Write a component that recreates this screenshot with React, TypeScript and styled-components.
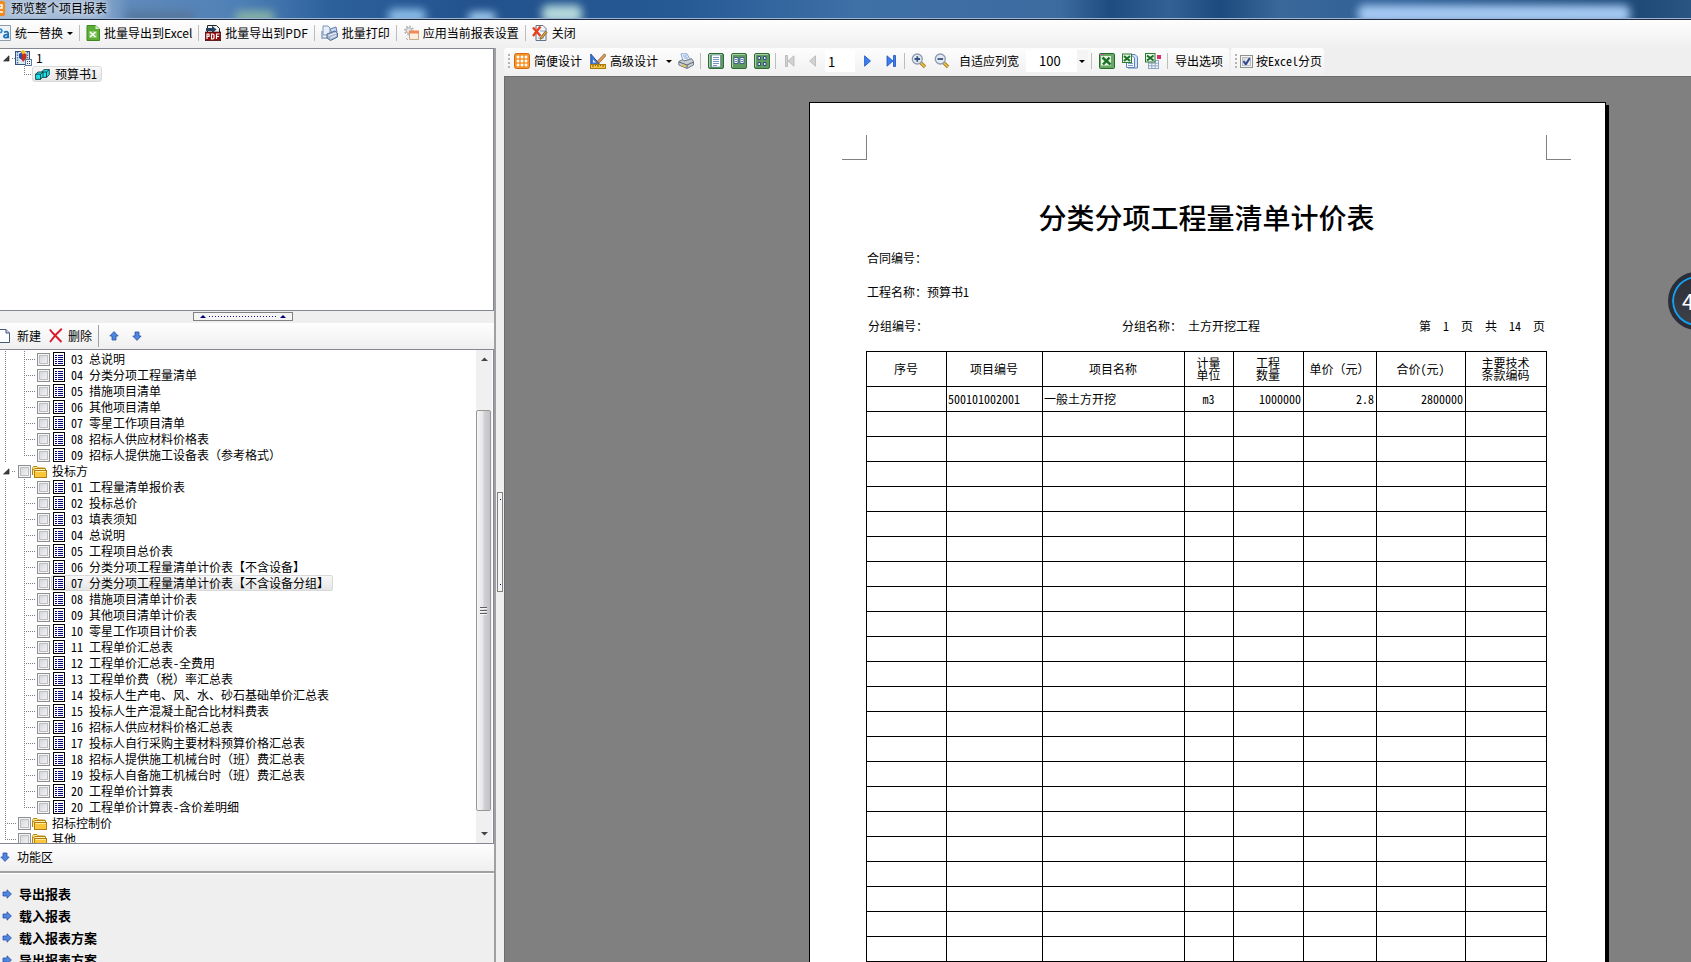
import React from "react";
import styled, { createGlobalStyle, css } from "styled-components";

const GlobalStyle = createGlobalStyle`
  *, *::before, *::after { box-sizing: border-box; }
  html, body { margin: 0; padding: 0; }
  body {
    font-family: "Noto Sans CJK SC", "Liberation Sans", sans-serif;
    font-size: 12px;
    line-height: 16px;
    color: #000;
  }
  button, input, select { font: inherit; color: inherit; margin: 0; }
  svg { display: block; flex: none; }
`;

/* ---------- window frame ---------- */

const Window = styled.div`
  display: flex;
  flex-direction: column;
  height: 100vh;
  overflow: hidden;
  position: relative;
  background: #efefef;
`;

const TitleBar = styled.header`
  flex: none;
  display: flex;
  align-items: center;
  gap: 6px;
  position: relative;
  height: 20px;
  padding-bottom: 3px;
  overflow: hidden;
  border-bottom: 1px solid #1d2b45;
  background: linear-gradient(90deg, #a9bdd6 0, #9fb6d3 90px, #5f8abb 130px, #4f80b6 240px, #2d619c 330px, #23528d 480px, #265a95 680px, #3f70a6 860px, #3c6ba0 1060px, #1f4c80 1110px, #346195 1170px, #1d4a7e 1220px, #3a689b 1280px, #2f5f96 1400px, #1f4a78 1640px, #2a5583 100%);
  &::after {
    content: "";
    position: absolute;
    inset: auto 0 0;
    height: 1px;
    background: #9fb6d3;
  }
`;

const Glow = styled.span<{ $x: number; $width: number; $height: number; $color: string }>`
  position: absolute;
  left: ${(p) => p.$x}px;
  bottom: -4px;
  width: ${(p) => p.$width}px;
  height: ${(p) => p.$height}px;
  border-radius: 6px;
  background: ${(p) => p.$color};
  filter: blur(4px);
`;

const TitleText = styled.h1`
  position: relative;
  margin: 0;
  font-size: 12px;
  font-weight: 400;
  text-shadow: 0 0 6px #dce7f3, 0 0 6px #dce7f3;
`;

const MainToolbar = styled.div`
  flex: none;
  display: flex;
  align-items: center;
  height: 28px;
  padding-bottom: 2px;
  overflow: hidden;
  background: linear-gradient(#fefefe, #efefef);
`;

const Body = styled.div`
  flex: 1;
  min-height: 0;
  display: flex;
`;

/* ---------- shared controls ---------- */

const HalfWidth = styled.span`
  font-feature-settings: "hwid" 1;
  white-space: pre;
`;

const ToolButton = styled.button<{ $left?: number; $right?: number; $gap?: number }>`
  display: flex;
  align-items: center;
  gap: ${(p) => p.$gap ?? 4}px;
  padding: 0 ${(p) => p.$right ?? 4}px 0 ${(p) => p.$left ?? 4}px;
  border: 0;
  background: none;
  white-space: nowrap;
`;

const IconButton = styled.button`
  flex: none;
  display: flex;
  justify-content: center;
  align-items: center;
  width: 23px;
  height: 22px;
  padding: 0;
  border: 0;
  background: none;
`;

const Separator = styled.span<{ $gap?: number }>`
  flex: none;
  width: 1px;
  height: 16px;
  margin: 0 ${(p) => p.$gap ?? 3}px;
  background: #bdbdbd;
`;

const DropArrow = styled.span<{ $before?: number }>`
  width: 0;
  height: 0;
  margin-left: ${(p) => p.$before ?? 0}px;
  border: 3px solid transparent;
  border-top-color: #000;
  border-bottom: 0;
`;

const CheckBox = styled.input`
  appearance: none;
  flex: none;
  width: 13px;
  height: 13px;
  border: 1px solid #8e8f8f;
  background: linear-gradient(135deg, #cdd0d5, #fafafa);
  box-shadow: inset 0 0 0 1px #f4f4f4, inset 0 0 0 2px #bcbec3;
  &:checked {
    background:
      url("data:image/svg+xml,%3Csvg xmlns='http://www.w3.org/2000/svg' viewBox='0 0 11 11'%3E%3Cpath d='M2.5 5l2.3 3.4L8.8 2' fill='none' stroke='%2331478f' stroke-width='2'/%3E%3C/svg%3E")
      center / 11px 11px no-repeat,
      linear-gradient(135deg, #cdd0d5, #fafafa);
  }
`;

/* ---------- left side ---------- */

const Sidebar = styled.aside`
  flex: 0 0 496px;
  display: flex;
  flex-direction: column;
  min-height: 0;
  border-right: 2px solid #a0a0a4;
`;

const ProjectTree = styled.div`
  flex: 0 0 263px;
  padding-top: 1px;
  background: #fff;
  border: solid #828790;
  border-width: 1px 1px 1px 0;
`;

const TreeRow = styled.div`
  display: flex;
  align-items: center;
  height: 16px;
  white-space: pre;
`;

const vDots = "repeating-linear-gradient(#808080 0 1px, transparent 1px 2px)";
const hDots = "repeating-linear-gradient(90deg, #808080 0 1px, transparent 1px 2px)";

const TrunkCell = styled.span<{ $line?: boolean }>`
  flex: 0 0 24px;
  height: 16px;
  background: ${(p) => (p.$line ? `${vDots} 5px 0 / 1px 16px no-repeat` : "none")};
`;

const BranchCell = styled.span<{ $last?: boolean; $width?: number; $x?: number }>`
  flex: 0 0 ${(p) => p.$width ?? 13}px;
  height: 16px;
  background:
    ${vDots} ${(p) => p.$x ?? 0}px 0 / 1px ${(p) => (p.$last ? 8 : 16)}px no-repeat,
    ${hDots} ${(p) => p.$x ?? 0}px 8px / 11px 1px no-repeat;
`;

const ExpanderCell = styled.button<{ $width: number }>`
  flex: 0 0 ${(p) => p.$width}px;
  display: flex;
  align-items: center;
  height: 16px;
  padding: 0 0 0 3px;
  border: 0;
  background: ${hDots} 12px 8px / 4px 1px no-repeat;
`;

const highlight = css`
  border-color: #d9d9d9;
  background: linear-gradient(#f8f8f8, #e6e6e6);
`;

const RowLabel = styled.label<{ $selected?: boolean; $folder?: boolean }>`
  display: flex;
  align-items: center;
  gap: ${(p) => (p.$folder ? 5 : 6)}px;
  height: 16px;
  margin-left: ${(p) => (p.$folder ? 0 : 1)}px;
  padding: 0 3px 0 ${(p) => (p.$folder ? 0 : 1)}px;
  border: 1px solid transparent;
  border-radius: 2px;
  ${(p) => p.$selected && highlight}
`;

const ProjectNode = styled.span`
  display: flex;
  align-items: center;
  gap: 5px;
  height: 16px;
  padding: 0 4px 0 2px;
  border: 1px solid transparent;
  border-radius: 3px;
  ${highlight}
`;

const RootNode = styled.span`
  display: flex;
  align-items: center;
  gap: 4px;
`;

const HorizontalSplitter = styled.div`
  flex: none;
  display: flex;
  justify-content: center;
  height: 12px;
  padding: 1px 8px 2px 0;
`;

const HorizontalHandle = styled.button`
  display: flex;
  align-items: center;
  justify-content: space-between;
  width: 100px;
  height: 9px;
  padding: 0 6px;
  border: 1px solid #808080;
  background: #f4f4f4;
`;

const HandleDots = styled.span`
  width: 68px;
  height: 1px;
  background: repeating-linear-gradient(90deg, #1a1a8c 0 1px, transparent 1px 3px);
`;

const HandleArrow = styled.span`
  border: 3px solid transparent;
  border-bottom-color: #00007a;
  border-top: 0;
`;

const ListToolbar = styled.div`
  flex: none;
  display: flex;
  align-items: center;
  height: 27px;
  padding-bottom: 1px;
  border-bottom: 1px solid #828790;
  background: linear-gradient(#fefefe, #efefef);
  overflow: hidden;
`;

const TallRule = styled.span`
  width: 1px;
  height: 22px;
  margin: 0 3px 0 2px;
  background: #a0a0a0;
`;

const ListBox = styled.div`
  flex: 1;
  min-height: 0;
  display: flex;
  padding-right: 1px;
  background: #fff;
  border: solid #828790;
  border-width: 0 1px 1px 0;
`;

const ListRows = styled.div`
  flex: 1;
  padding-top: 1px;
  overflow: hidden;
`;

const ScrollBar = styled.div`
  flex: 0 0 16px;
  display: flex;
  flex-direction: column;
  align-items: center;
  background: #f0f0f0;
`;

const ScrollButton = styled.button`
  flex: 0 0 18px;
  display: flex;
  align-items: center;
  justify-content: center;
  width: 16px;
  padding: 0;
  border: 0;
  background: none;
`;

const ScrollTrack = styled.div`
  flex: 1;
  display: flex;
  flex-direction: column;
  width: 100%;
  padding: 42px 1px 14px 0;
`;

const ScrollThumb = styled.div`
  flex: 1;
  display: flex;
  align-items: center;
  justify-content: center;
  border: 1px solid #979797;
  border-radius: 2px;
  background: linear-gradient(90deg, #f6f6f6, #e6e6e8 45%, #d0d0d5 55%, #c2c2c9);
`;

const FunctionPanel = styled.section`
  flex: 0 0 118px;
  overflow: hidden;
`;

const FunctionHead = styled.h2`
  display: flex;
  align-items: center;
  gap: 7px;
  height: 29px;
  margin: 0;
  padding-bottom: 1px;
  font-size: 12px;
  font-weight: 400;
  border-bottom: 2px solid #a0a0a0;
  background: linear-gradient(#fefefe, #efefef);
`;

const FunctionList = styled.div`
  display: flex;
  flex-direction: column;
  padding-top: 9px;
  border-top: 1px solid #fff;
`;

const FunctionButton = styled.button`
  display: flex;
  align-items: center;
  gap: 7px;
  height: 22px;
  padding: 0 2px;
  border: 0;
  background: none;
  font-size: 13px;
  font-weight: 700;
  white-space: nowrap;
`;

const VerticalSplitter = styled.div`
  flex: 0 0 8px;
  display: flex;
  flex-direction: column;
  align-items: center;
  justify-content: center;
  padding-top: 74px;
`;

const VerticalHandle = styled.button`
  width: 6px;
  height: 100px;
  padding: 0;
  border: 1px solid #808080;
  background:
    linear-gradient(#00007a, #00007a) 2px 6px / 1px 1px no-repeat,
    linear-gradient(#00007a, #00007a) 2px 91px / 1px 1px no-repeat,
    #f4f4f4;
`;

/* ---------- preview ---------- */

const Preview = styled.main`
  flex: 1;
  min-width: 0;
  display: flex;
  flex-direction: column;
`;

const PreviewBars = styled.div`
  flex: none;
  display: flex;
  gap: 2px;
  height: 28px;
`;

const Bar = styled.div`
  flex: none;
  display: flex;
  align-items: center;
  padding: 0 2px 2px 4px;
  border-radius: 3px 3px 0 0;
  background: linear-gradient(#fdfdfd, #f0f0f0);
  white-space: nowrap;
`;

const Grip = styled.span`
  flex: none;
  width: 2px;
  height: 15px;
  background: repeating-linear-gradient(#b4b4b4 0 2px, transparent 2px 4px);
`;

const PageInput = styled.input`
  flex: none;
  width: 30px;
  height: 22px;
  margin: 0 1px;
  padding: 0 3px;
  border: 0;
  background: #fff;
  font-size: 13px;
`;

const ZoomBox = styled.span`
  flex: none;
  display: grid;
  align-items: center;
  width: 62px;
  margin-left: 3px;
  background: linear-gradient(#f4f4f4, #f4f4f4) right / 11px 22px no-repeat #fff;
  > * { grid-area: 1 / 1; }
  > span { justify-self: end; margin-right: 3px; pointer-events: none; }
`;

const ZoomSelect = styled.select`
  appearance: none;
  width: 100%;
  height: 22px;
  padding: 0 0 0 13px;
  border: 0;
  background: none;
  font-size: 13px;
`;

const PagingLabel = styled.label`
  display: flex;
  align-items: center;
  gap: 3px;
`;

const Canvas = styled.div`
  flex: 1;
  min-height: 0;
  overflow: hidden;
  padding: 25px 82px 0 304px;
  border-top: 1px solid #6d6d6d;
  border-left: 1px solid #6d6d6d;
  background: #808080;
`;

const Paper = styled.article`
  width: 797px;
  min-height: 1124px;
  padding: 32px 58px 0 56px;
  border: 1px solid #000;
  background: #fff;
  box-shadow: 3px 3px 0 #000;
`;

const Corners = styled.div`
  display: flex;
  justify-content: space-between;
  margin: 0 -24px;
`;

const Corner = styled.span<{ $right?: boolean }>`
  width: 25px;
  height: 25px;
  border-bottom: 1px solid #808080;
  ${(p) => (p.$right ? "border-left" : "border-right")}: 1px solid #808080;
`;

const ReportTitle = styled.h2`
  margin: 37px 0 0;
  font-size: 28px;
  font-weight: 500;
  line-height: 40px;
  text-align: center;
`;

const MetaBlock = styled.div`
  display: flex;
  flex-direction: column;
  gap: 18px;
  padding: 13px 1px 17px;
`;

const MetaLine = styled.p`
  margin: 0;
`;

const MetaSplit = styled.div`
  display: grid;
  grid-template-columns: 254px 1fr auto;
  padding: 0 1px;
`;

const ReportTable = styled.table`
  width: 100%;
  table-layout: fixed;
  border-collapse: collapse;
`;

const HeadCell = styled.th`
  height: 35px;
  padding: 0 1px 0 0;
  border: 1px solid #000;
  font-weight: 400;
  line-height: 12px;
  text-align: center;
  white-space: pre;
`;

const Cell = styled.td<{ $align?: "left" | "center" | "right" }>`
  height: 25px;
  padding: 0 2px 0 1px;
  border: 1px solid #000;
  text-align: ${(p) => p.$align ?? "left"};
  white-space: nowrap;
`;

const SpeedBall = styled.div`
  position: absolute;
  top: 272px;
  right: -35px;
  width: 58px;
  height: 58px;
  padding-left: 10px;
  border: 4px solid #2b2d38;
  border-radius: 50%;
  background: linear-gradient(#2c2d36, #3f414b);
  box-shadow: inset 0 0 0 2px #14a0ee;
  color: #fff;
  font-size: 22px;
  line-height: 48px;
  white-space: nowrap;
`;

/* ---------- icons ---------- */

const AppIcon = () => (
  <svg width="5" height="15" viewBox="0 0 5 15">
    <rect x="-10" y="0" width="15" height="15" rx="2" fill="#f08a1d" />
    <path d="M0 4h2v3H0M0 11h3" stroke="#fff" strokeWidth="1.5" fill="none" />
  </svg>
);
const ReplaceIcon = () => (
  <svg width="11" height="16" viewBox="0 0 11 16">
    <path d="M0 .5h10.500v15H0" fill="#eef4fa" stroke="#8f9caa" />
    <path d="M0 4c2.500 0 2.500 3.500 0 3.500" fill="none" stroke="#2f8acb" strokeWidth="1.600" />
    <path d="M4 7.200c3-1.400 4.200-.2 4.200 1.300v3.800h1M8 9.300c-5 0-5 3.400-2.500 3.400 1.500 0 2.500-1 2.500-2" fill="none" stroke="#1d73b8" strokeWidth="1.700" />
  </svg>
);
const BatchExcelIcon = () => (
  <svg width="14" height="16" viewBox="0 0 14 16">
    <path d="M1 .5h8.500L13.500 4v11.500H1z" fill="#5cad36" stroke="#3c8a20" />
    <path d="M9.500.5V4h4z" fill="#d5efc5" />
    <rect x="3" y="6" width="8" height="7" fill="#82c761" />
    <path d="M4 7l5.500 5M9.500 7L4 12" stroke="#fff" strokeWidth="1.500" />
  </svg>
);
const PdfIcon = () => (
  <svg width="16" height="16" viewBox="0 0 16 16">
    <path d="M2.500.5h9l3 3v5h-12z" fill="#eef1f5" stroke="#222" />
    <path d="M1 3h6V.8l4.500 3.700L7 8V6H1z" fill="#24415f" />
    <rect x=".3" y="7" width="15.400" height="8.700" fill="#8d0c0c" stroke="#300" strokeWidth=".6" />
    <path d="M2 14V9h2v2.500H2M6.500 9v5h1.500l1-1V10L8 9zM11.500 14V9H14.500M11.500 11.500h2.500" fill="none" stroke="#fff" strokeWidth="1.200" />
  </svg>
);
const BatchPrintIcon = () => (
  <svg width="17" height="16" viewBox="0 0 17 16">
    <path d="M2 1h5l2 2v7H2z" fill="#e7eefa" stroke="#7d93b6" />
    <path d="M1 6v7h5" fill="none" stroke="#8ba0bf" strokeWidth="1.500" />
    <path d="M9 4l6-2 1 5-5 2z" fill="#c3d6f3" stroke="#6680aa" />
    <path d="M6 9l8-3 2.500 2v4l-7 3.500L6 13z" fill="#a5b6d1" stroke="#546c92" />
    <path d="M7.500 10.500L15 8M9.500 13l5.500-2.500" stroke="#f5f8ff" />
  </svg>
);
const ApplyIcon = () => (
  <svg width="16" height="16" viewBox="0 0 16 16">
    <circle cx="6" cy="5.500" r="4" fill="none" stroke="#b5b5b5" strokeWidth="2" strokeDasharray="1.600 1.500" />
    <circle cx="6" cy="5.500" r="2.800" fill="#e4e4e4" stroke="#b0b0b0" />
    <path d="M6.500 6.500h9v8h-9z" fill="#fbeedf" stroke="#c9a78b" />
    <rect x="6" y="5.500" width="10" height="3" fill="#f08a55" />
    <path d="M3 13l2 2" stroke="#aaa" />
  </svg>
);
const CloseIcon = () => (
  <svg width="16" height="16" viewBox="0 0 16 16">
    <path d="M4 .5h7l3 3v12H4z" fill="#f2f5fa" stroke="#63738c" />
    <path d="M6 13h6M8 6h5" stroke="#93a3ba" />
    <path d="M1 2.500l7.500 8.500M8.500 1.500L1 11" stroke="#e8401c" strokeWidth="2.400" />
    <path d="M15 7.500l-5 6-2 .8.500-2L13.500 6z" fill="#d9a441" stroke="#7c5a1c" strokeWidth=".8" />
  </svg>
);
const ProjectIcon = () => (
  <svg width="17" height="16" viewBox="0 0 17 16">
    <rect x=".5" y="1.500" width="14" height="13" fill="#dce8f4" stroke="#33527a" />
    <path d="M2.500 2v12M12.500 2v8" stroke="#5476a0" strokeWidth="1.500" strokeDasharray="1.500 1" />
    <path d="M4 4l3-2v8L4 8z" fill="#2750b4" />
    <path d="M7 2.500L11.500 4v4L8 12 6.500 9z" fill="#c4311c" />
    <path d="M5.500 1.500L8 0l3 1.500-3 3z" fill="#f3c022" />
    <rect x="10.500" y="9.500" width="6" height="6" fill="#f2f6fb" stroke="#5a7ba3" />
    <path d="M12.500 11v1m2-1v1m-2 1v1m2-1v1" stroke="#345" />
  </svg>
);
const BookIcon = () => (
  <svg width="15" height="11" viewBox="0 0 15 11">
    <path d="M6.500 3L9 .6h5.300v5L11.500 8.400h-5z" fill="#1fe0e6" stroke="#062a2c" strokeWidth=".8" />
    <path d="M6.500 3h5v5.400M11.500 3l2.800-2.400" fill="none" stroke="#062a2c" strokeWidth=".8" />
    <path d="M.6 5.200L3 3h5v4.600L5.500 10.400H.6z" fill="#1fe0e6" stroke="#062a2c" strokeWidth=".8" />
    <path d="M.6 5.200h4.900v5.200M5.500 5.200L8 3" fill="none" stroke="#062a2c" strokeWidth=".8" />
  </svg>
);
const ExpandIcon = () => (
  <svg width="7" height="7" viewBox="0 0 7 7">
    <path d="M6 .8V6H.6z" fill="#404040" stroke="#222" strokeWidth=".7" />
  </svg>
);
const ReportIcon = () => (
  <svg width="12" height="14" viewBox="0 0 12 14" shapeRendering="crispEdges">
    <rect x=".5" y=".5" width="11" height="13" fill="#fff" stroke="#000" />
    <path d="M2 3.500h2m1 0h5M2 5.500h2m1 0h5M2 7.500h2m1 0h5M2 9.500h2m1 0h5M2 11.500h2m1 0h5" stroke="#000080" />
  </svg>
);
const FolderIcon = () => (
  <svg width="15" height="13" viewBox="0 0 15 13">
    <path d="M.5 10V3.500l1-2H5l1.500 1.500h6V5" fill="#fdf08c" stroke="#b98a14" />
    <path d="M.5 10V5.500L3 3.500h10.500V5" fill="#fff3b0" stroke="#b07f10" />
    <rect x="2.500" y="5.500" width="12" height="7" fill="#fcc63c" stroke="#b07f10" />
    <path d="M3.500 6.500h10" stroke="#ffe896" />
  </svg>
);
const NewIcon = () => (
  <svg width="10" height="14" viewBox="0 0 10 14">
    <path d="M0 .5h6L9.500 4v9.500H0" fill="#fbfdff" stroke="#46597a" />
    <path d="M6 .5V4h3.500" fill="#c7d5ea" stroke="#46597a" />
  </svg>
);
const DeleteIcon = () => (
  <svg width="14" height="15" viewBox="0 0 14 15">
    <path d="M.8 1.500l3 3.500L12.500 14M12.800.8L7 6.500 1 14" fill="none" stroke="#d71c2b" strokeWidth="1.900" />
  </svg>
);

const rotations = { right: 0, down: 90, up: 270 };
const BlueArrow = ({ dir }: { dir: keyof typeof rotations }) => (
  <svg width="10" height="10" viewBox="0 0 10 10">
    <path
      d="M1 3h4V.8L9.400 5 5 9.200V7H1z"
      transform={`rotate(${rotations[dir]} 5 5)`}
      fill="#4f86e0"
      stroke="#2a50a8"
      strokeWidth=".8"
    />
  </svg>
);

const ScrollArrow = ({ down }: { down?: boolean }) => (
  <svg width="7" height="4" viewBox="0 0 7 4">
    <path d={down ? "M0 0h7L3.500 3.500z" : "M0 4h7L3.500.5z"} fill="#444" />
  </svg>
);
const ThumbGrip = () => (
  <svg width="7" height="8" viewBox="0 0 7 8" shapeRendering="crispEdges">
    <path d="M0 .5h7M0 3.500h7M0 6.500h7" stroke="#606060" />
    <path d="M0 1.500h7M0 4.500h7M0 7.500h7" stroke="#f5f5f5" />
  </svg>
);
const SimpleDesignIcon = () => (
  <svg width="16" height="16" viewBox="0 0 16 16">
    <rect x=".5" y=".5" width="15" height="15" rx="2" fill="#f7942c" stroke="#d8690c" />
    <path d="M3 3h2v2H3zm4 0h2v2H7zm4 0h2v2h-2zM3 7h2v2H3zm4 0h2v2H7zm4 0h2v2h-2zM3 11h2v2H3zm4 0h2v2H7zm4 0h2v2h-2z" fill="#fff" stroke="#fff" strokeWidth=".6" />
  </svg>
);
const AdvancedDesignIcon = () => (
  <svg width="16" height="16" viewBox="0 0 16 16">
    <path d="M.8 1v10.500h9z" fill="#3f78d8" stroke="#224f9e" />
    <path d="M3 6.500v3h3z" fill="#e8f0fb" />
    <path d="M14.500.8L8 7.500l-1 2.800 2.800-1L16 2.500z" fill="#e0a063" stroke="#8a4f1d" strokeWidth=".8" />
    <rect x=".5" y="11.500" width="15" height="4" fill="#f5c644" stroke="#a97a0c" />
    <path d="M3 12v2m2.500-2v1M8 12v2m2.500-2v1m2.500-1v2" stroke="#7b580a" />
  </svg>
);
const PrinterIcon = () => (
  <svg width="16" height="16" viewBox="0 0 16 16">
    <path d="M3 .8h6l3 5.500-7 2z" fill="#f3f8ff" stroke="#86a5cf" />
    <path d="M5 3h4M6 5h4" stroke="#7ca1d8" />
    <path d="M.8 8.500L5 6.500l1 1.500 5.500-1.500 2-1 2 3v3.500L9 15.500.8 12z" fill="#c9cdd5" stroke="#757c88" />
    <path d="M1 9l8 3 6.500-3M9 12v3" fill="none" stroke="#5d6470" />
    <path d="M4 12l4 1.500" stroke="#e9c24a" strokeWidth="1.500" />
  </svg>
);
const GreenBase = ({ children }: { children: React.ReactNode }) => (
  <svg width="16" height="16" viewBox="0 0 16 16">
    <rect x=".5" y=".5" width="15" height="15" rx="1.500" fill="#5f9a60" stroke="#2f6b35" />
    <path d="M1.500 14V1.500H14" fill="none" stroke="#a8d0a4" />
    {children}
  </svg>
);
const OnePageIcon = () => (
  <GreenBase>
    <rect x="3.500" y="2" width="9" height="12" fill="#fff" stroke="#52709c" strokeWidth=".6" />
    <path d="M5 4.500h6M5 6.500h6M5 8.500h6M5 10.500h6M5 12.500h4" stroke="#7592c0" />
  </GreenBase>
);
const TwoPageIcon = () => (
  <GreenBase>
    <path d="M3 4.500h4v6H3zM9 4.500h4v6H9z" fill="#fff" stroke="#40618f" />
    <path d="M4 6.500h2M4 8.500h2m4-2h2m-2 2h2" stroke="#5a7dba" />
  </GreenBase>
);
const FourPageIcon = () => (
  <GreenBase>
    <path d="M4 3.500h2.500v3H4zM9.500 3.500H12v3H9.500zM4 9.500h2.500v3H4zM9.500 9.500H12v3H9.500z" fill="#e8effa" stroke="#2f4f80" />
  </GreenBase>
);
const FirstIcon = () => (
  <svg width="10" height="12" viewBox="0 0 10 12">
    <path d="M.5.5h2v11h-2zM9 .8v10.400L3 6z" fill="#d2d2d2" stroke="#b4b4b4" strokeWidth=".8" />
  </svg>
);
const PrevIcon = () => (
  <svg width="7" height="12" viewBox="0 0 7 12">
    <path d="M6.500.8v10.400L.6 6z" fill="#d2d2d2" stroke="#b4b4b4" strokeWidth=".8" />
  </svg>
);
const NextIcon = () => (
  <svg width="7" height="12" viewBox="0 0 7 12">
    <path d="M.6.8v10.400L6.500 6z" fill="#3c7ff0" stroke="#1c4fc0" strokeWidth=".8" />
  </svg>
);
const LastIcon = () => (
  <svg width="10" height="12" viewBox="0 0 10 12">
    <path d="M7.500.5h2v11h-2zM1 .8v10.400L7 6z" fill="#3c7ff0" stroke="#1c4fc0" strokeWidth=".8" />
  </svg>
);
const MagnifierIcon = ({ plus }: { plus?: boolean }) => (
  <svg width="16" height="16" viewBox="0 0 16 16">
    <path d="M9.500 9.500l4.500 4.500" stroke="#9a7414" strokeWidth="3.200" />
    <path d="M9.500 9.500l4.300 4.300" stroke="#efc24d" strokeWidth="1.700" />
    <circle cx="6.300" cy="6" r="5" fill="#e2eaf4" stroke="#8f9cb0" strokeWidth="1.300" />
    <path d={plus ? "M3.500 6h5.600M6.300 3.200v5.600" : "M3.500 6h5.600"} stroke="#38527c" strokeWidth="1.800" />
  </svg>
);
const ExcelIcon = () => (
  <svg width="16" height="16" viewBox="0 0 16 16">
    <rect x=".5" y=".5" width="15" height="15" rx="1" fill="#6aa866" stroke="#236b26" />
    <rect x="2" y="3" width="10" height="9.500" fill="#e4f3e1" />
    <path d="M3.500 4.500l8 7M10.500 4.500L4 11.500" stroke="#1d6e28" strokeWidth="2.400" />
    <path d="M2 1.500h3" stroke="#d544c8" />
  </svg>
);
const ExcelPagesIcon = () => (
  <svg width="16" height="16" viewBox="0 0 16 16">
    <path d="M7 1.500h6l2.500 2.500v11H6z" fill="#d3e3f8" stroke="#5f83b8" />
    <path d="M4.500 3h6l2 2v9.500h-8z" fill="#f3f8ff" stroke="#5f83b8" />
    <path d="M6 10.500h5M6 12.500h5" stroke="#7d9fd0" />
    <rect x=".5" y="1" width="9" height="8.500" fill="#eaf6e8" stroke="#2c7c33" />
    <path d="M2 3l6 5M8 3L2 8" stroke="#1d6e28" strokeWidth="2" />
  </svg>
);
const ExcelGridIcon = () => (
  <svg width="16" height="16" viewBox="0 0 16 16">
    <rect x="3.500" y="7.500" width="10" height="8" fill="#f7faff" stroke="#8ea4c4" />
    <path d="M3.500 10.200h10M3.500 12.800h10M6.800 8v7.500M10.200 8v7.500" stroke="#8ea4c4" />
    <rect x=".5" y=".5" width="9.500" height="8.500" fill="#eaf6e8" stroke="#2c7c33" />
    <path d="M2 2.500l6.500 5M8.500 2.500l-6.500 5" stroke="#1d6e28" strokeWidth="2" />
    <rect x="12" y="2" width="4" height="4" fill="#d92c6a" />
  </svg>
);

/* ---------- data ---------- */

const tenderReports = [
  "03 总说明",
  "04 分类分项工程量清单",
  "05 措施项目清单",
  "06 其他项目清单",
  "07 零星工作项目清单",
  "08 招标人供应材料价格表",
  "09 招标人提供施工设备表（参考格式）",
];

const bidReports = [
  "01 工程量清单报价表",
  "02 投标总价",
  "03 填表须知",
  "04 总说明",
  "05 工程项目总价表",
  "06 分类分项工程量清单计价表【不含设备】",
  "07 分类分项工程量清单计价表【不含设备分组】",
  "08 措施项目清单计价表",
  "09 其他项目清单计价表",
  "10 零星工作项目计价表",
  "11 工程单价汇总表",
  "12 工程单价汇总表-全费用",
  "13 工程单价费（税）率汇总表",
  "14 投标人生产电、风、水、砂石基础单价汇总表",
  "15 投标人生产混凝土配合比材料费表",
  "16 招标人供应材料价格汇总表",
  "17 投标人自行采购主要材料预算价格汇总表",
  "18 招标人提供施工机械台时（班）费汇总表",
  "19 投标人自备施工机械台时（班）费汇总表",
  "20 工程单价计算表",
  "20 工程单价计算表-含价差明细",
];
const selectedReport = bidReports[6];

const functions = ["导出报表", "载入报表", "载入报表方案", "导出报表方案"];

const columns: { title: string; width: number; align: "left" | "center" | "right" }[] = [
  { title: "序号", width: 80, align: "center" },
  { title: "项目编号", width: 96, align: "left" },
  { title: "项目名称", width: 142, align: "left" },
  { title: "计量\n单位", width: 49, align: "center" },
  { title: "工程\n数量", width: 70, align: "right" },
  { title: "单价（元）", width: 73, align: "right" },
  { title: "合价(元)", width: 89, align: "right" },
  { title: "主要技术\n条款编码", width: 81, align: "left" },
];

const tableRows = [
  ["", "500101002001", "一般土方开挖", "m3", "1000000", "2.8", "2800000", ""],
  ...Array.from({ length: 26 }, () => columns.map(() => "")),
];

/* ---------- parts ---------- */

/* Sets runs of ASCII in half-width forms and leaves full-width punctuation alone. */
const Mixed = ({ text }: { text: string }) => (
  <span>
    {text.split(/([ -~]+)/).map((run, i) => (i % 2 ? <HalfWidth key={i}>{run}</HalfWidth> : run))}
  </span>
);

const ReportRow = ({ id, name, last }: { id: string; name: string; last?: boolean }) => (
  <TreeRow>
    <TrunkCell $line />
    <BranchCell $last={last} />
    <CheckBox type="checkbox" id={id} />
    <RowLabel htmlFor={id} $selected={name === selectedReport}>
      <ReportIcon />
      <Mixed text={name} />
    </RowLabel>
  </TreeRow>
);

const FolderRow = ({ id, name, open, last }: { id: string; name: string; open?: boolean; last?: boolean }) => (
  <TreeRow>
    {open ? (
      <ExpanderCell $width={18} aria-label="折叠">
        <ExpandIcon />
      </ExpanderCell>
    ) : (
      <BranchCell $width={18} $x={5} $last={last} />
    )}
    <CheckBox type="checkbox" id={id} />
    <RowLabel htmlFor={id} $folder>
      <FolderIcon />
      {name}
    </RowLabel>
  </TreeRow>
);

export default function App() {
  return (
    <Window>
      <GlobalStyle />
      <TitleBar>
        <Glow $x={125} $width={70} $height={12} $color="#56779c" />
        <Glow $x={235} $width={40} $height={12} $color="#86b3a6" />
        <Glow $x={388} $width={38} $height={14} $color="#8cbde8" />
        <Glow $x={468} $width={28} $height={11} $color="#a6d2f5" />
        <Glow $x={542} $width={40} $height={18} $color="#b4d8dc" />
        <Glow $x={1358} $width={272} $height={18} $color="#a4c8f2" />
        <AppIcon />
        <TitleText>预览整个项目报表</TitleText>
      </TitleBar>

      <MainToolbar role="toolbar">
        <ToolButton $left={0}><ReplaceIcon />统一替换<DropArrow /></ToolButton>
        <Separator $gap={2} />
        <ToolButton><BatchExcelIcon />批量导出到Excel</ToolButton>
        <Separator $gap={2} />
        <ToolButton><PdfIcon />批量导出到PDF</ToolButton>
        <Separator $gap={2} />
        <ToolButton><BatchPrintIcon />批量打印</ToolButton>
        <Separator $gap={2} />
        <ToolButton><ApplyIcon />应用当前报表设置</ToolButton>
        <Separator $gap={2} />
        <ToolButton><CloseIcon />关闭</ToolButton>
      </MainToolbar>

      <Body>
        <Sidebar>
          <ProjectTree>
            <TreeRow>
              <ExpanderCell $width={15} aria-label="折叠"><ExpandIcon /></ExpanderCell>
              <RootNode><ProjectIcon />1</RootNode>
            </TreeRow>
            <TreeRow>
              <TrunkCell />
              <BranchCell $last $width={8} />
              <ProjectNode><BookIcon /><Mixed text="预算书1" /></ProjectNode>
            </TreeRow>
          </ProjectTree>

          <HorizontalSplitter>
            <HorizontalHandle aria-label="上下分隔条">
              <HandleArrow />
              <HandleDots />
              <HandleArrow />
            </HorizontalHandle>
          </HorizontalSplitter>

          <ListToolbar role="toolbar">
            <ToolButton $left={0} $gap={7}><NewIcon />新建</ToolButton>
            <ToolButton $gap={5}><DeleteIcon />删除</ToolButton>
            <TallRule />
            <IconButton aria-label="上移"><BlueArrow dir="up" /></IconButton>
            <IconButton aria-label="下移"><BlueArrow dir="down" /></IconButton>
          </ListToolbar>

          <ListBox>
            <ListRows>
              {tenderReports.map((name, i) => (
                <ReportRow key={name} id={`tender-${i}`} name={name} last={i === tenderReports.length - 1} />
              ))}
              <FolderRow id="folder-bid" name="投标方" open />
              {bidReports.map((name, i) => (
                <ReportRow key={name} id={`bid-${i}`} name={name} last={i === bidReports.length - 1} />
              ))}
              <FolderRow id="folder-control" name="招标控制价" />
              <FolderRow id="folder-other" name="其他" last />
            </ListRows>
            <ScrollBar>
              <ScrollButton aria-label="向上滚动"><ScrollArrow /></ScrollButton>
              <ScrollTrack>
                <ScrollThumb><ThumbGrip /></ScrollThumb>
              </ScrollTrack>
              <ScrollButton aria-label="向下滚动"><ScrollArrow down /></ScrollButton>
            </ScrollBar>
          </ListBox>

          <FunctionPanel>
            <FunctionHead><BlueArrow dir="down" />功能区</FunctionHead>
            <FunctionList>
              {functions.map((name) => (
                <FunctionButton key={name}><BlueArrow dir="right" />{name}</FunctionButton>
              ))}
            </FunctionList>
          </FunctionPanel>
        </Sidebar>

        <VerticalSplitter>
          <VerticalHandle aria-label="左右分隔条" />
        </VerticalSplitter>

        <Preview>
          <PreviewBars>
            <Bar role="toolbar">
              <Grip />
              <ToolButton><SimpleDesignIcon />简便设计</ToolButton>
              <ToolButton $right={2}><AdvancedDesignIcon />高级设计<DropArrow $before={4} /></ToolButton>
              <IconButton aria-label="打印"><PrinterIcon /></IconButton>
              <Separator />
              <IconButton aria-label="单页"><OnePageIcon /></IconButton>
              <IconButton aria-label="双页"><TwoPageIcon /></IconButton>
              <IconButton aria-label="多页"><FourPageIcon /></IconButton>
              <Separator $gap={2} />
              <IconButton aria-label="首页" disabled><FirstIcon /></IconButton>
              <IconButton aria-label="上一页" disabled><PrevIcon /></IconButton>
              <PageInput aria-label="页码" defaultValue="1" />
              <IconButton aria-label="下一页"><NextIcon /></IconButton>
              <IconButton aria-label="末页"><LastIcon /></IconButton>
              <Separator $gap={2} />
              <IconButton aria-label="放大"><MagnifierIcon plus /></IconButton>
              <IconButton aria-label="缩小"><MagnifierIcon /></IconButton>
              <ToolButton $left={6}>自适应列宽</ToolButton>
              <ZoomBox>
                <ZoomSelect aria-label="缩放比例" defaultValue="100">
                  <option>100</option>
                </ZoomSelect>
                <DropArrow />
              </ZoomBox>
              <Separator />
              <IconButton aria-label="导出Excel"><ExcelIcon /></IconButton>
              <IconButton aria-label="导出多个Excel"><ExcelPagesIcon /></IconButton>
              <IconButton aria-label="导出Excel表格"><ExcelGridIcon /></IconButton>
              <Separator />
              <ToolButton>导出选项</ToolButton>
            </Bar>
            <Bar>
              <PagingLabel>
                <Grip />
                <CheckBox type="checkbox" defaultChecked />
                <Mixed text="按Excel分页" />
              </PagingLabel>
            </Bar>
          </PreviewBars>

          <Canvas>
            <Paper>
              <Corners>
                <Corner />
                <Corner $right />
              </Corners>
              <ReportTitle>分类分项工程量清单计价表</ReportTitle>
              <MetaBlock>
                <MetaLine>合同编号：</MetaLine>
                <MetaLine><Mixed text="工程名称：预算书1" /></MetaLine>
                <MetaSplit>
                  <span>分组编号：</span>
                  <Mixed text="分组名称： 土方开挖工程" />
                  <Mixed text="第  1  页  共  14  页" />
                </MetaSplit>
              </MetaBlock>
              <ReportTable>
                <colgroup>
                  {columns.map((c) => <col key={c.title} width={c.width} />)}
                </colgroup>
                <thead>
                  <tr>{columns.map((c) => <HeadCell key={c.title}><Mixed text={c.title} /></HeadCell>)}</tr>
                </thead>
                <tbody>
                  {tableRows.map((row, r) => (
                    <tr key={r}>
                      {row.map((value, c) => (
                        <Cell key={c} $align={columns[c].align}><Mixed text={value} /></Cell>
                      ))}
                    </tr>
                  ))}
                </tbody>
              </ReportTable>
            </Paper>
          </Canvas>
        </Preview>
      </Body>

      <SpeedBall>4</SpeedBall>
    </Window>
  );
}
